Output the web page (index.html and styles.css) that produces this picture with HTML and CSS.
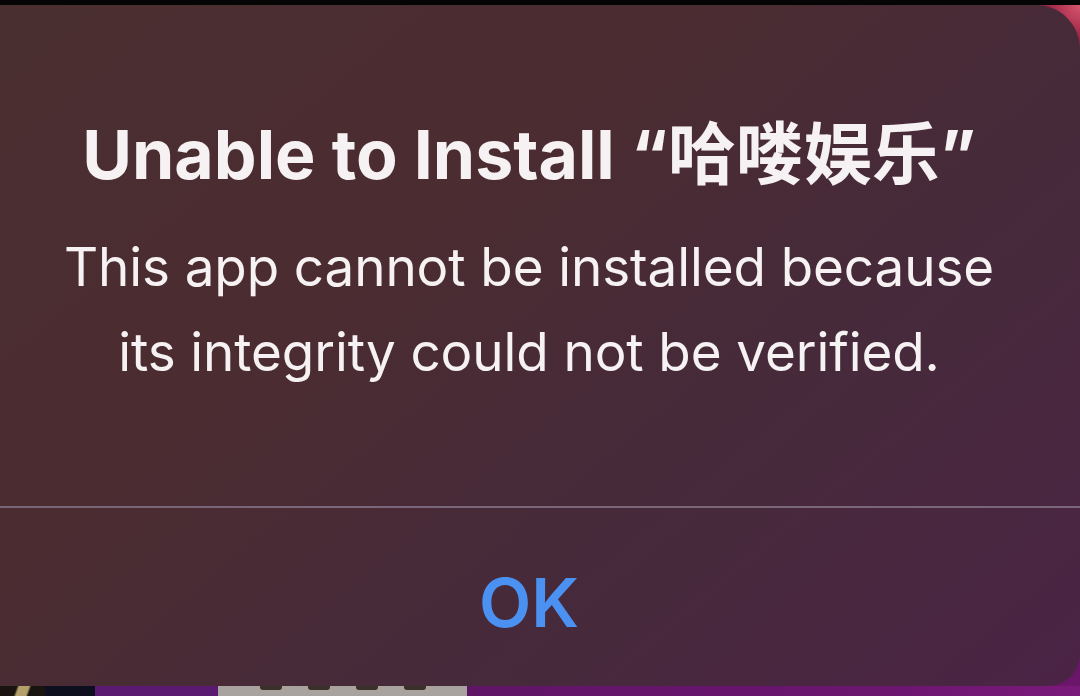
FILE: index.html
```html
<!DOCTYPE html>
<html>
<head>
<meta charset="utf-8">
<link rel="stylesheet" href="styles.css">
</head>
<body>
<div class="screen">
  <div class="topbar"></div>
  <div class="stage">
    <div class="alert">
      <div class="alert-body">
        <h1 class="title">Unable to Install “哈喽娱乐”</h1>
        <p class="message">This app cannot be installed because<br>its integrity could not be verified.</p>
      </div>
      <div class="divider"></div>
      <div class="actions">
        <span class="ok">OK</span>
      </div>
    </div>
    <div class="strip">
      <div class="seg seg-a"></div>
      <div class="seg seg-b"></div>
      <div class="seg seg-c"></div>
      <div class="seg seg-d">
        <i class="blot"></i><i class="blot"></i><i class="blot"></i><i class="blot"></i>
      </div>
      <div class="seg seg-e"></div>
    </div>
  </div>
</div>
</body>
</html>
```

FILE: styles.css
```css
* { box-sizing: border-box; }
html, body { margin: 0; padding: 0; }
body {
  width: 1080px;
  height: 696px;
  overflow: hidden;
  background: #000;
  font-family: Inter, "Noto Sans CJK SC", "Noto Sans", sans-serif;
}
.screen {
  width: 1080px;
  height: 696px;
  display: flex;
  flex-direction: column;
}
.topbar {
  height: 5px;
  background: #050505;
  flex: none;
}
.stage {
  flex: 1;
  display: flex;
  flex-direction: column;
  background:
    radial-gradient(circle at 100% 0%, #d8566f 0, #a02848 30px, transparent 60px),
    linear-gradient(180deg, #6e1f3a 0%, #5a1a55 50%, #6c156c 100%);
}
.alert {
  flex: 1;
  display: flex;
  flex-direction: column;
  border-radius: 0 44px 32px 0;
  background: linear-gradient(140deg, #4a2f30 0%, #4b2c31 35%, #462a3a 65%, #4b2445 100%);
  overflow: hidden;
}
.alert-body {
  padding: 108px 22px 0 0;
  text-align: center;
  color: #f6f1f2;
}
.title {
  margin: 0;
  font-size: 68px;
  line-height: 82px;
  font-weight: 700;
  letter-spacing: 0;
}
.message {
  margin: 30px 0 0;
  font-size: 53px;
  line-height: 85px;
  font-weight: 400;
  letter-spacing: -0.1px;
}
.divider {
  margin-top: 111px;
  height: 2px;
  background: #7b6679;
}
.actions {
  flex: 1;
  display: flex;
  justify-content: center;
  padding: 53px 22px 0 0;
}
.ok {
  font-size: 68px;
  line-height: 82px;
  font-weight: 600;
  color: #4b91f2;
}
.strip {
  height: 10px;
  flex: none;
  display: flex;
}
.seg { height: 100%; }
.seg-a { width: 45px; background: linear-gradient(110deg, #1a1410 0, #1a1410 35%, #b3a06a 40%, #b3a06a 60%, #1a1410 65%); }
.seg-b { width: 50px; background: #0d0f1f; }
.seg-c { width: 123px; background: #5b1a72; }
.seg-d {
  width: 249px;
  background: #a8a39f;
  display: flex;
  align-items: flex-start;
  justify-content: center;
  gap: 26px;
}
.blot {
  width: 22px;
  height: 4px;
  background: #3a3028;
  border-radius: 0 0 3px 3px;
}
.seg-e { flex: 1; background: linear-gradient(90deg, #5f1566, #6c1670 70%, #7a1a7a); }
```
